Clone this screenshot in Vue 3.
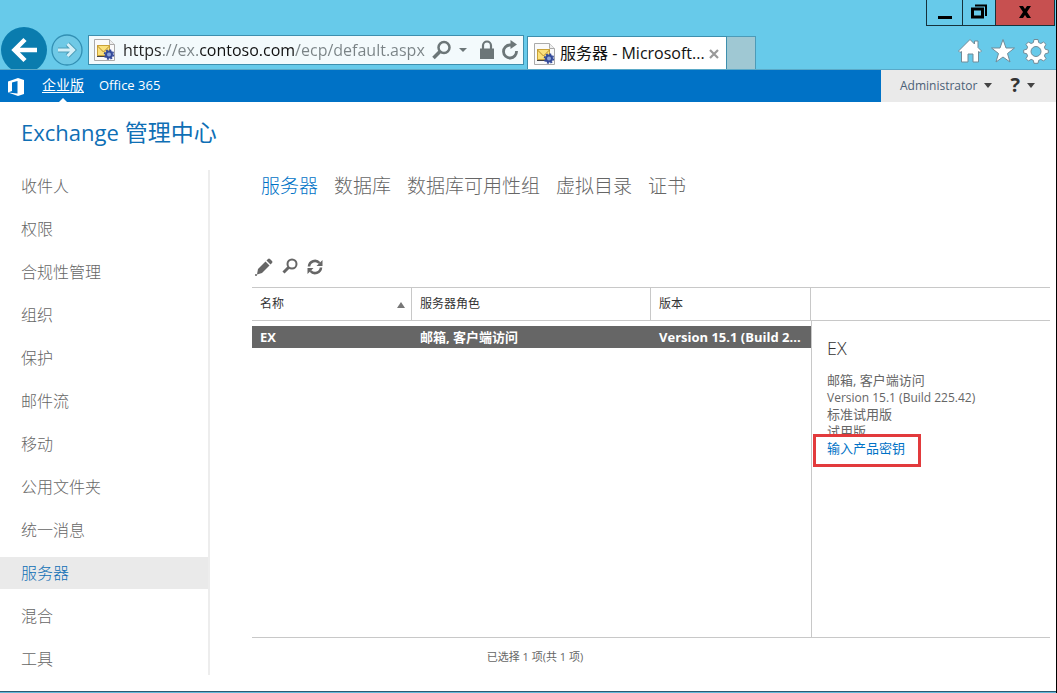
<script setup>
import { ref } from 'vue'

const address = ref('https://ex.contoso.com/ecp/default.aspx')
const features = ['收件人', '权限', '合规性管理', '组织', '保护', '邮件流', '移动', '公用文件夹', '统一消息', '服务器', '混合', '工具']
const activeFeature = ref('服务器')
const tabs = ['服务器', '数据库', '数据库可用性组', '虚拟目录', '证书']
const activeTab = ref('服务器')
const servers = [{ name: 'EX', roles: '邮箱, 客户端访问', version: 'Version 15.1 (Build 2...' }]
</script>

<template>
  <div class="window">
    <header class="chrome">
      <div class="titlebar">
        <button class="win" aria-label="最小化"><svg width="16" height="16" viewBox="0 0 16 16"><path d="M1 13.500h14" stroke="#000" stroke-width="3" /></svg></button>
        <button class="win" aria-label="还原"><svg width="16" height="16" viewBox="0 0 16 16"><path d="M4 1.500h11V12" fill="none" stroke="#000" stroke-width="2" /><rect x="1.500" y="5" width="10" height="8" fill="none" stroke="#000" stroke-width="3" /></svg></button>
        <button class="win close" aria-label="关闭"><svg width="14" height="14" viewBox="0 0 14 14"><path d="M1 1h4l2 3 2-3h4L9 7l4 6H9L7 10l-2 3H1l4-6z" fill="#000" /></svg></button>
      </div>
      <div class="navrow">
        <button class="back" aria-label="后退"><svg width="46" height="46" viewBox="0 0 46 46"><circle cx="23" cy="23" r="23" fill="#0a7cae" /><path d="M36 23H14M24 12.500L13.500 23 24 33.500" fill="none" stroke="#fff" stroke-width="4.500" /></svg></button>
        <button class="forward" aria-label="前进"><svg width="32" height="32" viewBox="0 0 32 32"><circle cx="16" cy="16" r="15" fill="#6fc9e6" stroke="#328fb3" stroke-width="1.300" /><path d="M7 16h15M16.500 10l6 6-6 6" fill="none" stroke="#4f9fb9" stroke-width="5" /><path d="M7 16h15M16.500 10l6 6-6 6" fill="none" stroke="#d5f0f8" stroke-width="3" /></svg></button>
        <div class="address">
          <svg class="site" width="23" height="24" viewBox="0 0 23 24"><path d="M1.500 1.500h15l5 5v16h-20z" fill="#fafafa" stroke="#aaa" /><path d="M16.500 1.500v5h5" fill="#eee" stroke="#aaa" /><rect x="4.500" y="7.500" width="12" height="10" fill="#fbe17b" stroke="#c9a238" /><path d="M4.500 8l6 6 6-6" fill="none" stroke="#b88c2a" /><path d="M4 18.500h9" stroke="#444" /><circle cx="16" cy="16.500" r="3" fill="#8ca4d8" stroke="#344b9a" stroke-width="2" /><circle cx="16" cy="16.500" r="4.500" fill="none" stroke="#344b9a" stroke-width="1.500" stroke-dasharray="2 1.500" /></svg>
          <input v-model="address" class="url" aria-label="地址" spellcheck="false" />
          <button aria-label="搜索"><svg width="20" height="20" viewBox="0 0 20 20"><circle cx="12" cy="7.500" r="5.500" fill="none" stroke="#6c7678" stroke-width="2.500" /><path d="M8 11.500L1.500 18" stroke="#6c7678" stroke-width="3.500" /></svg></button>
          <button class="drop" aria-label="显示地址列表"><svg width="10" height="6" viewBox="0 0 10 6"><path d="M1 1h8L5 5z" fill="#6c7678" /></svg></button>
          <button aria-label="安全报告"><svg width="16" height="20" viewBox="0 0 16 20"><path d="M4 9V5.500a4 4 0 018 0V9" fill="none" stroke="#6c7678" stroke-width="2.200" /><path d="M1 8.500h14V19H1z" fill="#6c7678" /></svg></button>
          <button aria-label="刷新"><svg width="18" height="20" viewBox="0 0 18 20"><path d="M15.500 11A6.500 6.500 0 119 5h2" fill="none" stroke="#6c7678" stroke-width="2.800" /><path d="M9.500 0l6.500 4.500-6.500 4.500z" fill="#6c7678" /></svg></button>
        </div>
        <div class="pagetab">
          <svg class="site" width="23" height="24" viewBox="0 0 23 24"><path d="M1.500 1.500h15l5 5v16h-20z" fill="#fafafa" stroke="#aaa" /><path d="M16.500 1.500v5h5" fill="#eee" stroke="#aaa" /><rect x="4.500" y="7.500" width="12" height="10" fill="#fbe17b" stroke="#c9a238" /><path d="M4.500 8l6 6 6-6" fill="none" stroke="#b88c2a" /><path d="M4 18.500h9" stroke="#444" /><circle cx="16" cy="16.500" r="3" fill="#8ca4d8" stroke="#344b9a" stroke-width="2" /><circle cx="16" cy="16.500" r="4.500" fill="none" stroke="#344b9a" stroke-width="1.500" stroke-dasharray="2 1.500" /></svg>
          <span class="pagename">服务器 - Microsoft...</span>
          <button aria-label="关闭选项卡"><svg width="10" height="10" viewBox="0 0 10 10"><path d="M1 1l8 8M9 1L1 9" stroke="#999" stroke-width="2.200" /></svg></button>
        </div>
        <button class="newtab" aria-label="新建选项卡"></button>
        <div class="tools">
          <button aria-label="主页"><svg width="26" height="26" viewBox="0 0 26 26"><path d="M1.500 13L13 1.500 17.500 6V3H21v6.500l3.500 3.500-1.500 1.500-1.500-1V24H16v-8h-5v8H4.500V13.500L3 14.500z" fill="#fff" stroke="#718b98" /></svg></button>
          <button aria-label="收藏夹"><svg width="26" height="26" viewBox="0 0 26 26"><path d="M13 1.500l3 8.500h8.500l-7 5.500 2.500 8.500-7-5-7 5 2.500-8.500-7-5.500H10z" fill="#fff" stroke="#718b98" /></svg></button>
          <button aria-label="工具"><svg width="26" height="26" viewBox="0 0 26 26"><path d="M11 1.500h4l.7 3.100 2.200.9L20.600 4 23 6.400l-1.600 2.700.9 2.200 3 .7v3l-3 .7-.9 2.200L23 20.600 20.600 23l-2.700-1.600-2.200.9-.7 3h-4l-.7-3-2.200-.9L5.400 23 3 20.600l1.600-2.700-.9-2.200-3-.7v-3l3-.7.9-2.200L3 6.400 5.400 4l2.700 1.500 2.200-.9zM13 8.500a5 5 0 100 10 5 5 0 000-10z" fill="#fff" fill-rule="evenodd" stroke="#718b98" /></svg></button>
        </div>
      </div>
    </header>

    <div class="suite">
      <nav class="suitenav">
        <svg class="office" width="16" height="20" viewBox="0 0 16 20"><path d="M0 4.500L10 1l6 2v14l-6 2-10-3.500 9.500 1V4L4 5.500v8.500L0 15.500z" fill="#fff" /></svg>
        <a href="#" class="current">企业版</a>
        <a href="#">Office 365</a>
      </nav>
      <div class="account">
        <button>Administrator <svg width="8" height="5" viewBox="0 0 8 5"><path d="M0 0h8L4 5z" fill="#444" /></svg></button>
        <button class="help" aria-label="帮助"><b>?</b> <svg width="8" height="5" viewBox="0 0 8 5"><path d="M0 0h8L4 5z" fill="#444" /></svg></button>
      </div>
    </div>

    <h1><span class="product">Exchange</span> 管理中心</h1>

    <div class="workspace">
      <nav class="features">
        <a v-for="f in features" :key="f" href="#" :class="{ active: f === activeFeature }" @click.prevent="activeFeature = f">{{ f }}</a>
      </nav>
      <main>
        <nav class="tabs">
          <a v-for="t in tabs" :key="t" href="#" :class="{ active: t === activeTab }" @click.prevent="activeTab = t">{{ t }}</a>
        </nav>
        <div class="toolbar">
          <button aria-label="编辑"><svg width="18" height="18" viewBox="0 0 18 18"><path d="M3 11l7.500-7.500 4 4L7 15l-5 1.500z" fill="#666" /><path d="M11.500 2.500l1.500-1.500q1-1 2 0l2 2q1 1 0 2l-1.500 1.500z" fill="#666" /><path d="M0 16h2v2H0z" fill="#888" /></svg></button>
          <button aria-label="搜索"><svg width="16" height="18" viewBox="0 0 16 18"><circle cx="10" cy="6" r="4.500" fill="none" stroke="#666" stroke-width="2" /><path d="M6.500 9.500L1.500 14.500" stroke="#666" stroke-width="3" /></svg></button>
          <button aria-label="刷新"><svg width="16" height="18" viewBox="0 0 16 18"><path d="M2 8.500A6 6 0 0112.500 5M14 9.500A6 6 0 013.500 13" fill="none" stroke="#666" stroke-width="2.600" /><path d="M15.500 2v6h-6zM.5 16v-6h6z" fill="#666" /></svg></button>
        </div>
        <div class="pane">
          <div class="list">
            <table>
              <colgroup><col class="c-name" /><col class="c-roles" /><col class="c-version" /></colgroup>
              <thead>
                <tr>
                  <th><span class="sorted">名称 <svg width="8" height="6" viewBox="0 0 8 6"><path d="M4 0l4 6H0z" fill="#777" /></svg></span></th>
                  <th>服务器角色</th>
                  <th>版本</th>
                </tr>
              </thead>
              <tbody>
                <tr v-for="s in servers" :key="s.name"><td>{{ s.name }}</td><td>{{ s.roles }}</td><td>{{ s.version }}</td></tr>
              </tbody>
            </table>
          </div>
          <aside>
            <div class="asidehead"></div>
            <div class="details">
              <h2>EX</h2>
              <p>邮箱, 客户端访问</p>
              <p class="build">Version 15.1 (Build 225.42)</p>
              <p>标准试用版</p>
              <p>试用版</p>
              <p class="callout"><a href="#">输入产品密钥</a></p>
            </div>
          </aside>
        </div>
        <footer>已选择 1 项(共 1 项)</footer>
      </main>
    </div>
    <div class="taskbar"></div>
  </div>
</template>

<style>
body { background: #fff; }
</style>

<style scoped>
*, *::before { box-sizing: border-box; }
.window { min-height: 100vh; display: flex; flex-direction: column; border-right: 1px solid #000; background: #fff; color: #666; font-family: "Open Sans", "Noto Sans CJK SC", sans-serif; font-size: 13px; }
button { border: 0; padding: 0; background: none; font: inherit; color: inherit; display: flex; align-items: center; justify-content: center; }
a { color: inherit; text-decoration: none; }
svg { flex: none; display: block; }
h1, h2, p { margin: 0; font-weight: 400; }

.chrome { height: 70px; background: #67caea; overflow: hidden; border-bottom: 1px solid #5aa9c8; }
.titlebar { height: 26px; display: flex; justify-content: flex-end; padding-right: 1px; }
.win { width: 36px; border: 1px solid #16323c; border-top: 0; border-right: 0; padding-bottom: 2px; }
.win:nth-child(2) { width: 33px; }
.win.close { width: 60px; background: #c75050; border-right: 1px solid #16323c; }
.navrow { height: 44px; display: flex; align-items: flex-start; }
.back { margin-left: 1px; margin-top: 1px; width: 46px; }
.forward { margin: 8px 5px 0 4px; width: 32px; }
.address { flex: 1 1 436px; min-width: 0; height: 30px; margin-top: 9px; display: flex; align-items: center; border: 1px solid #3e8fae; background: #f3fafc; padding: 0 4px; gap: 6px; }
.drop { margin-right: 5px; }
.url { flex: 1; min-width: 0; border: 0; padding: 0 0 0 1px; height: 26px; outline: 0; font-family: "Open Sans", sans-serif; font-size: 16px; color: #222; }
.url { background: linear-gradient(90deg, #222 0 40px, #7a8386 40px 76px, #111 76px 173px, #7a8386 173px); background-clip: text; -webkit-background-clip: text; -webkit-text-fill-color: transparent; }
.pagetab { flex: 1 1 200px; min-width: 0; margin: 10px 0 0 3px; height: 34px; display: flex; align-items: center; gap: 4px; padding: 0 7px 0 5px; background: #fff; border: 1px solid #3e8fae; border-bottom: 0; color: #111; }
.pagename { flex: 1; font-size: 16px; line-height: 30px; padding-bottom: 2px; white-space: nowrap; }
.newtab { width: 29px; height: 34px; margin-top: 10px; background: #9fc8d3; border: 1px solid #4c9bb8; border-left: 0; }
.tools { flex: 1 1 300px; display: flex; justify-content: flex-end; gap: 7px; padding: 12px 7px 0 0; }

.suite { height: 32px; display: flex; background: #0072c6; }
.suitenav { flex: 1; display: flex; align-items: stretch; padding-left: 8px; color: #fff; line-height: 30px; }
.office { margin: 7px 18px 0 0; }
.suitenav a { margin-right: 15px; }
.current { position: relative; font-size: 14px; text-decoration: underline; text-underline-offset: 2px; }
.current::after { content: ""; position: absolute; left: 50%; bottom: 0; margin-left: -4px; border: 4px solid transparent; border-top: 0; border-bottom-color: #fff; }
.account { width: 175px; background: #eaeaea; display: flex; align-items: center; padding: 0 0 2px 19px; gap: 18px; color: #4a6177; }
.account button { gap: 7px; font-size: 12px; }
.account .help { color: #333; }
.help b { font-size: 20px; line-height: 24px; }

h1 { padding: 14px 21px 22px; font-size: 23px; line-height: 32px; color: #0f6fb5; }
.product { font-size: 22px; }
.workspace { flex: 1; display: flex; padding-bottom: 16px; }
.features { width: 210px; display: flex; flex-direction: column; gap: 11px; border-right: 2px solid #ededed; }
.features a { padding-left: 21px; font-size: 16px; font-weight: 300; line-height: 32px; }
.features .active { background: #eaeaea; color: #0f6fb5; }
main { flex: 1; min-width: 0; display: flex; flex-direction: column; padding: 0 6px 0 42px; }
.tabs { display: flex; gap: 16px; padding-left: 9px; font-size: 19px; font-weight: 300; line-height: 32px; }
.tabs .active { color: #0072c6; }
.toolbar { height: 24px; margin: 53px 0 8px; padding-left: 3px; display: flex; align-items: center; gap: 9px; }
.pane { flex: 1; display: flex; border-bottom: 1px solid #c8c8c8; }
.list { flex: 1; min-width: 0; }
table { width: 100%; table-layout: fixed; border-collapse: separate; border-spacing: 0; }
.c-name { width: 160px; }
.c-version { width: 160px; }
th { height: 34px; border: 1px solid #c8c8c8; border-left: 0; padding: 0 8px 2px; text-align: left; font-size: 12px; font-weight: 400; color: #333; }
.sorted { display: flex; align-items: center; justify-content: space-between; margin-right: -2px; }
.sorted svg { margin-top: 4px; }
td { height: 27px; border-top: 5px solid #fff; padding: 0 0 0 8px; background: #666; color: #fff; font-weight: 700; line-height: 22px; white-space: nowrap; }
aside { width: 239px; display: flex; flex-direction: column; }
.asidehead { height: 34px; border: 1px solid #c8c8c8; border-width: 1px 0; }
.details { flex: 1; border-left: 1px solid #c8c8c8; padding: 15px; line-height: 17px; }
h2 { font-size: 18px; font-weight: 300; line-height: 24px; margin-bottom: 12px; color: #333; }
.build { font-size: 12px; }
.callout { position: relative; color: #0072c6; }
.callout::before { content: ""; position: absolute; left: -14px; top: -6px; width: 108px; height: 33px; border: 3px solid #e23a3c; background: #fff; }
.callout a { position: relative; }
footer { line-height: 37px; padding-right: 232px; text-align: center; font-size: 11px; }
.taskbar { height: 2px; background: #62b8d8; border-top: 1px solid #2a5b72; }
</style>
